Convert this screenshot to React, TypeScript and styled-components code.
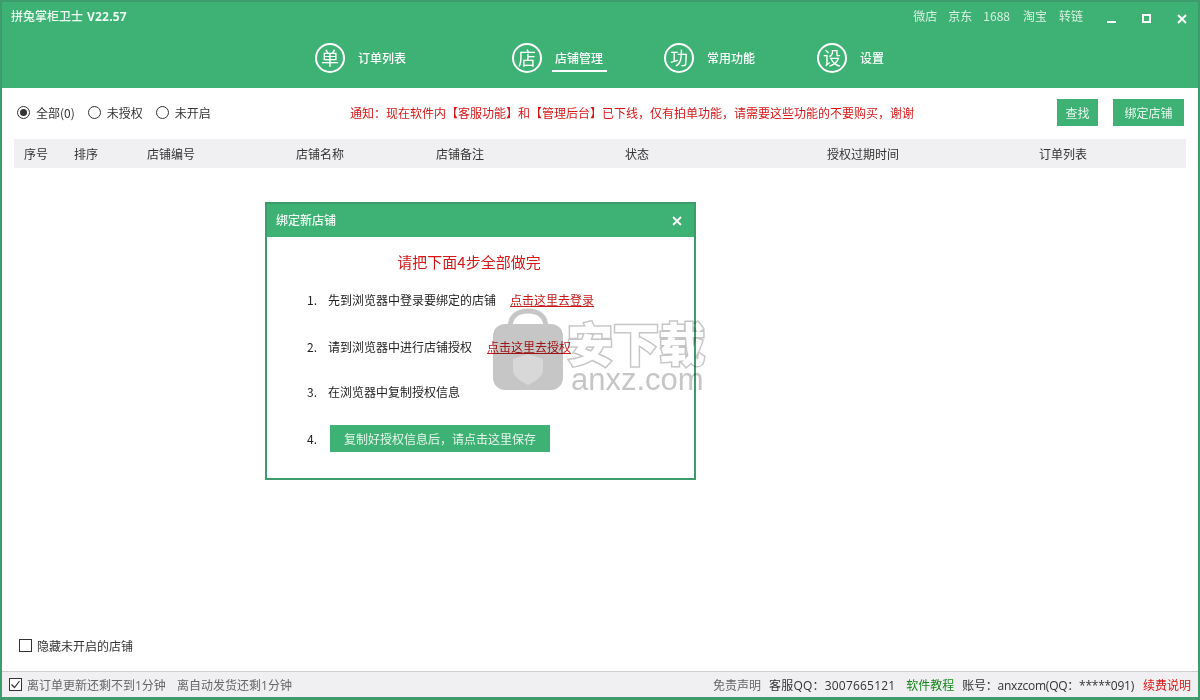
import React from "react";
import styled, { createGlobalStyle } from "styled-components";

const Global = createGlobalStyle`
  html, body { margin: 0; padding: 0; background: #fff; overflow: hidden; }
  * { box-sizing: border-box; }
  body { font-family: "Noto Sans CJK SC", "Liberation Sans", sans-serif; font-size: 12px; color: #222; }
`;

const Win = styled.div`
  position: relative;
  width: 1200px;
  height: 700px;
  display: flex;
  flex-direction: column;
  border: 2px solid #3d9c6c;
  border-bottom-width: 3px;
  background: #fff;
  overflow: hidden;
`;
const Header = styled.header`
  height: 86px;
  background: #3eb174;
  color: #fff;
  flex: none;
  display: flex;
  flex-direction: column;
`;
const TitleRow = styled.div`
  height: 40px;
  display: flex;
  align-items: flex-start;
  padding: 5px 11px 0 9px;
  line-height: 17px;
`;
const AppTitle = styled.div`
  font-weight: 500;
  flex: 1;
  color: #eef9f3;
`;
const Version = styled.span`
  font-family: "Open Sans", sans-serif;
  font-weight: 700;
  margin-left: 4px;
  letter-spacing: 0.2px;
`;
const TopLink = styled.span`
  color: #d9f0e3;
  margin-left: 11px;
  &:first-of-type { margin-left: 0; }
  &:nth-of-type(4) { margin-left: 13px; }
  &:last-of-type { margin-left: 12px; }
`;
const WinButtons = styled.div`
  display: flex;
  align-items: center;
  height: 20px;
  gap: 26px;
  margin: 2px 0 0 24px;
`;
const Nav = styled.nav`
  display: flex;
  padding-left: 313px;
  align-items: center;
  height: 32px;
`;
const NavItem = styled.div`
  display: flex;
  align-items: center;
  gap: 13px;
  margin-right: 61px;
  &:first-child { margin-right: 106px; }
  &:nth-child(3) { margin-right: 62px; }
`;
const Badge = styled.span`
  width: 30px;
  height: 30px;
  border: 2px solid #fff;
  border-radius: 50%;
  font-size: 18px;
  line-height: 25px;
  text-align: center;
  flex: none;
`;
const NavLabel = styled.span<{ $on?: boolean }>`
  position: relative;
  font-weight: 500;
  line-height: 16px;
  ${(p) => p.$on && `
    &::after {
      content: "";
      position: absolute;
      left: -3px;
      right: -4px;
      bottom: -6px;
      height: 2px;
      background: #fff;
    }
  `}
`;
const Toolbar = styled.div`
  height: 51px;
  flex: none;
  display: flex;
  align-items: center;
  padding: 0 14px 2px 15px;
`;
const RadioGroup = styled.div`
  width: 333px;
  display: flex;
  gap: 13px;
  flex: none;
`;
const RadioItem = styled.label`
  display: flex;
  align-items: center;
  gap: 6px;
  color: #333;
`;
const RadioMark = styled.span<{ $on?: boolean }>`
  position: relative;
  width: 13px;
  height: 13px;
  border: 1px solid #333;
  border-radius: 50%;
  ${(p) => p.$on && `
    &::after {
      content: "";
      position: absolute;
      inset: 2px;
      border-radius: 50%;
      background: #333;
    }
  `}
`;
const Notice = styled.div`
  flex: 1;
  color: #d81818;
`;
const Btn = styled.button<{ $w: number }>`
  width: ${(p) => p.$w}px;
  height: 27px;
  border: 0;
  padding: 0;
  background: #3eb174;
  color: #e6f6ed;
  font: inherit;
  margin-left: 15px;
`;
const TableHead = styled.div`
  flex: none;
  margin: 0 12px;
  height: 29px;
  background: #f0eff1;
  display: grid;
  grid-template-columns: 50px 73px 149px 140px 189px 202px 212px 1fr;
  align-items: center;
  padding-left: 10px;
  color: #333;
`;
const Spacer = styled.div`
  flex: 1;
`;
const HideRow = styled.label`
  flex: none;
  height: 28px;
  display: flex;
  align-items: center;
  gap: 5px;
  padding-left: 17px;
  margin-bottom: 12px;
  color: #333;
`;
const Check = styled.span`
  width: 13px;
  height: 13px;
  border: 1px solid #333;
  display: flex;
  align-items: center;
  justify-content: center;
  flex: none;
  background: #fff;
`;
const Status = styled.footer`
  flex: none;
  height: 26px;
  background: #f0eff1;
  border-top: 1px solid #cfcfcf;
  display: flex;
  align-items: center;
  padding: 0 7px 0 7px;
  color: #333;
  font-family: "Open Sans", "Noto Sans CJK SC", sans-serif;
`;
const StatusLeft = styled.div`
  flex: 1;
  display: flex;
  align-items: center;
  gap: 5px;
`;
const Muted = styled.span`
  color: #666;
`;
const StatusText = styled.span<{ $track: number }>`
  letter-spacing: ${(p) => p.$track}px;
`;
const Green = styled.span`
  color: #17861f;
  margin: 0 8px 0 11px;
`;
const Disclaimer = styled(Muted)`
  margin-right: 8px;
`;
const Red = styled.span`
  color: #d81818;
  margin-left: 9px;
`;
const Modal = styled.section`
  position: absolute;
  left: 263px;
  top: 200px;
  width: 431px;
  height: 278px;
  border: 2px solid #3d9c6c;
  background: #fff;
`;
const ModalHead = styled.div`
  height: 33px;
  background: #3eb174;
  color: #f0faf4;
  display: flex;
  align-items: center;
  justify-content: space-between;
  padding: 0 12px 3px 9px;
  font-weight: 500;
  svg { margin-top: 3px; }
`;
const ModalBody = styled.div`
  display: flex;
  flex-direction: column;
`;
const ModalTitle = styled.h2`
  margin: 14px 0 0;
  font-size: 15px;
  font-weight: 400;
  line-height: 22px;
  color: #d81818;
  text-align: center;
  padding-right: 23px;
`;
const Step = styled.div<{ $top: number }>`
  display: flex;
  align-items: center;
  height: 18px;
  padding-left: 40px;
  margin-top: ${(p) => p.$top}px;
  color: #222;
`;
const StepNum = styled.span`
  width: 21px;
  flex: none;
`;
const StepLink = styled.a<{ $gap: number }>`
  color: #c81a1a;
  text-decoration: underline;
  margin-left: ${(p) => p.$gap}px;
`;
const SaveBtn = styled.button`
  width: 220px;
  height: 27px;
  border: 0;
  background: #3eb174;
  color: #e6f6ed;
  font: inherit;
  margin-left: 2px;
`;
const Mark = styled.div`
  position: absolute;
  left: 490px;
  top: 306px;
  width: 220px;
  height: 90px;
  display: flex;
  pointer-events: none;
  mix-blend-mode: multiply;
`;
const MarkText = styled.div`
  margin-left: 3px;
  display: flex;
  flex-direction: column;
  font-family: "Noto Sans CJK SC", sans-serif;
`;
const MarkCn = styled.div`
  font-size: 46px;
  font-weight: 900;
  line-height: 50px;
  margin-top: 8px;
  color: #fff;
  -webkit-text-stroke: 3px #c6c6c6;
  paint-order: stroke fill;
  white-space: nowrap;
`;
const MarkEn = styled.div`
  font-family: "Liberation Sans", sans-serif;
  font-size: 31px;
  line-height: 28px;
  color: #c6c6c6;
  margin-left: 4px;
`;

const nav = [
  ["单", "订单列表"],
  ["店", "店铺管理"],
  ["功", "常用功能"],
  ["设", "设置"],
];
const cols = ["序号", "排序", "店铺编号", "店铺名称", "店铺备注", "状态", "授权过期时间", "订单列表"];

export default function App() {
  return (
    <Win>
      <Global />
      <Header>
        <TitleRow>
          <AppTitle>拼兔掌柜卫士<Version>V22.57</Version></AppTitle>
          <TopLink>微店</TopLink>
          <TopLink>京东</TopLink>
          <TopLink>1688</TopLink>
          <TopLink>淘宝</TopLink>
          <TopLink>转链</TopLink>
          <WinButtons>
            <svg width="9" height="10" viewBox="0 0 9 10"><rect x="0" y="7" width="9" height="2" fill="#fff" /></svg>
            <svg width="9" height="10" viewBox="0 0 9 10"><rect x="1" y="1" width="7" height="7" fill="none" stroke="#fff" strokeWidth="2" /></svg>
            <svg width="10" height="10" viewBox="0 0 10 10"><path d="M1 1l8 8M9 1l-8 8" stroke="#fff" strokeWidth="2" /></svg>
          </WinButtons>
        </TitleRow>
        <Nav>
          {nav.map(([b, l], i) => (
            <NavItem key={b}>
              <Badge>{b}</Badge>
              <NavLabel $on={i === 1}>{l}</NavLabel>
            </NavItem>
          ))}
        </Nav>
      </Header>
      <Toolbar>
        <RadioGroup>
          <RadioItem><RadioMark $on />全部(0)</RadioItem>
          <RadioItem><RadioMark />未授权</RadioItem>
          <RadioItem><RadioMark />未开启</RadioItem>
        </RadioGroup>
        <Notice>通知：现在软件内【客服功能】和【管理后台】已下线，仅有拍单功能，请需要这些功能的不要购买，谢谢</Notice>
        <Btn $w={41}>查找</Btn>
        <Btn $w={71}>绑定店铺</Btn>
      </Toolbar>
      <TableHead>
        {cols.map((c, i) => <span key={i}>{c}</span>)}
      </TableHead>
      <Spacer />
      <HideRow><Check />隐藏未开启的店铺</HideRow>
      <Status>
        <StatusLeft>
          <Check>
            <svg width="11" height="11" viewBox="0 0 11 11"><path d="M1.5 5.5l3 3 5-6.5" fill="none" stroke="#333" strokeWidth="1.2" /></svg>
          </Check>
          <Muted>离订单更新还剩不到1分钟</Muted>
          <Muted>&nbsp;&nbsp;离自动发货还剩1分钟</Muted>
        </StatusLeft>
        <Disclaimer>免责声明</Disclaimer>
        <StatusText $track={0.2}>客服QQ：3007665121</StatusText>
        <Green>软件教程</Green>
        <StatusText $track={-0.25}>账号：anxzcom(QQ：*****091)</StatusText>
        <Red>续费说明</Red>
      </Status>
      <Modal>
        <ModalHead>
          <span>绑定新店铺</span>
          <svg width="10" height="10" viewBox="0 0 10 10"><path d="M1 1l8 8M9 1l-8 8" stroke="#fff" strokeWidth="1.8" /></svg>
        </ModalHead>
        <ModalBody>
          <ModalTitle>请把下面4步全部做完</ModalTitle>
          <Step $top={17}><StepNum>1.</StepNum>先到浏览器中登录要绑定的店铺<StepLink $gap={14}>点击这里去登录</StepLink></Step>
          <Step $top={29}><StepNum>2.</StepNum>请到浏览器中进行店铺授权<StepLink $gap={15}>点击这里去授权</StepLink></Step>
          <Step $top={27}><StepNum>3.</StepNum>在浏览器中复制授权信息</Step>
          <Step $top={29}><StepNum>4.</StepNum><SaveBtn>复制好授权信息后，请点击这里保存</SaveBtn></Step>
        </ModalBody>
      </Modal>
      <Mark>
        <svg width="72" height="88" viewBox="0 0 72 88">
          <path d="M18 20C18 8 26 3 36 3s18 5 18 17" fill="none" stroke="#c6c6c6" strokeWidth="5" />
          <rect x="1" y="16" width="70" height="66" rx="12" fill="#c6c6c6" />
          <path d="M36 46l15 5v11c0 7-9 12-15 15-6-3-15-8-15-15V51z" fill="#d8d8d8" />
        </svg>
        <MarkText>
          <MarkCn>安下载</MarkCn>
          <MarkEn>anxz.com</MarkEn>
        </MarkText>
      </Mark>
    </Win>
  );
}
